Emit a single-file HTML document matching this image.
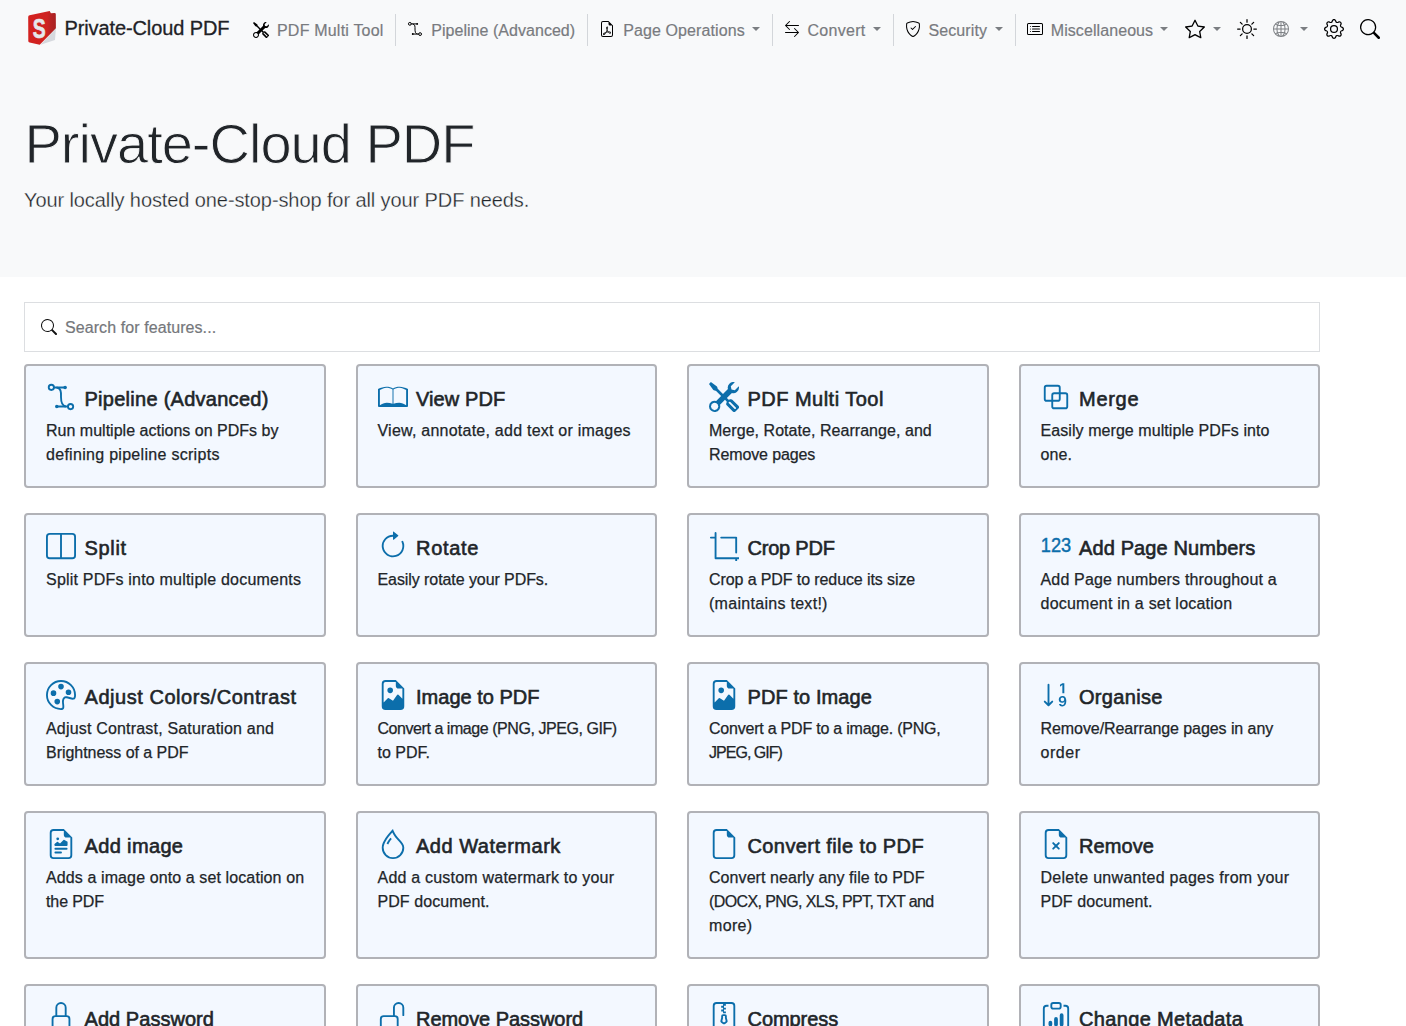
<!DOCTYPE html>
<html lang="en">
<head>
<meta charset="utf-8">
<title>Private-Cloud PDF</title>
<style>
*{box-sizing:border-box}
html,body{margin:0;padding:0}
body{width:1406px;height:1026px;overflow:hidden;background:#fff;color:#212529;
  font-family:"Liberation Sans",sans-serif;font-size:16px;line-height:1.5;-webkit-font-smoothing:antialiased}
a{color:inherit;text-decoration:none}
.t{white-space:nowrap}
nav{position:absolute;left:0;top:0;width:1406px;height:60px;background:#f8f9fa}
nav .logo{position:absolute;left:20px;top:4px}
.brand{position:absolute;left:64.5px;top:12.5px;font-size:20px;line-height:30px;color:#1f2226;-webkit-text-stroke:0.3px #1f2226;white-space:nowrap}
.nl{position:absolute;top:18.75px;font-size:16px;line-height:24px;color:#797b7f;-webkit-text-stroke:0.2px #797b7f;white-space:nowrap}
.ni{position:absolute;display:block}
.caret{position:absolute;top:27px;width:0;height:0;border-top:4.8px solid #7b7e82;border-left:4.5px solid transparent;border-right:4.5px solid transparent}
.vr{position:absolute;top:14px;width:1px;height:32px;background:#d3d6da}
.hero{position:absolute;left:0;top:60px;width:1406px;height:217.25px;background:#f8f9fa}
h1{position:absolute;left:24.5px;top:106px;margin:0;font-size:56px;line-height:76px;font-weight:300;color:#212529;-webkit-text-stroke:0.9px #f8f9fa;white-space:nowrap}
.lead{position:absolute;left:24px;top:184.75px;margin:0;font-size:20px;line-height:30px;font-weight:300;color:#212529;-webkit-text-stroke:0.3px #f8f9fa;white-space:nowrap}
.search{position:absolute;left:24px;top:302px;width:1296px;height:49.5px;border:1px solid #dcdee1;background:#fff}
.search svg{position:absolute;left:16px;top:16px;color:#111}
.search > span{position:absolute;left:40px;top:12.5px;line-height:24px;color:#75777b;-webkit-text-stroke:0.2px #75777b}
.grid{position:absolute;left:24px;top:364px;width:1296px;display:grid;grid-template-columns:repeat(4,301.5px);gap:25px 30px}
.card{display:block;border:2px solid #b1b2b7;border-radius:4px;background:#f3f8ff;padding:20px;min-height:124px}
.ct{position:relative;height:32px}
.ci{position:absolute;left:0;top:-4px;color:#0c6eab;overflow:hidden}
h5{position:absolute;left:38.5px;top:1px;margin:0;font-size:20px;line-height:24px;font-weight:400;-webkit-text-stroke:0.6px #212529;color:#212529;white-space:nowrap}
.card p{position:relative;top:0.75px;margin:0;font-size:16px;line-height:24px;color:#212529;-webkit-text-stroke:0.25px #212529}
</style>
</head>
<body>

<nav>
<svg class="logo" width="44" height="48" viewBox="0 0 44 48">
<defs><linearGradient id="lg" x1="0" x2="1" y1="0" y2="0"><stop offset="0" stop-color="#d3211f"/><stop offset="0.68" stop-color="#cf2221"/><stop offset="0.82" stop-color="#b62424"/><stop offset="1" stop-color="#a82222"/></linearGradient></defs>
<path d="M35.9 24.6 35 36 20.5 40.8Z" fill="#d6d9de"/>
<path d="M9.6 11.3 29.7 7.1 30.9 9.3 34.6 9Q35.8 9 35.8 10.3L35.9 24.2 19.7 40.8 9.6 38.6Q8.3 38.3 8.3 37L8.2 12.9Q8.2 11.6 9.6 11.3Z" fill="url(#lg)"/>
<text x="12.8" y="34.1" font-size="28.4" font-weight="700" textLength="12.9" lengthAdjust="spacingAndGlyphs" fill="#e6e8ec" stroke="#e6e8ec" stroke-width="0.7" font-family="'Liberation Sans', sans-serif">S</text>
</svg>
<div class="brand"><span class="t" id="brand" style="letter-spacing:-0.111px">Private-Cloud PDF</span></div>
<svg class="ni" width="16" height="16" viewBox="0 0 16 16" fill="currentColor" style="left:253px;top:21.5px;color:#000"><path d="M1 0 0 1l2.2 3.081a1 1 0 0 0 .815.419h.07a1 1 0 0 1 .708.293l2.675 2.675-2.617 2.654A3.003 3.003 0 0 0 0 13a3 3 0 1 0 5.878-.851l2.654-2.617.968.968-.305.914a1 1 0 0 0 .242 1.023l3.27 3.27a.997.997 0 0 0 1.414 0l1.586-1.586a.997.997 0 0 0 0-1.414l-3.27-3.27a1 1 0 0 0-1.023-.242L10.5 9.5l-.96-.96 2.68-2.643A3.005 3.005 0 0 0 16 3c0-.269-.035-.53-.102-.777l-2.14 2.141L12 4l-.364-1.757L13.777.102a3 3 0 0 0-3.675 3.68L7.462 6.46 4.793 3.793a1 1 0 0 1-.293-.707v-.071a1 1 0 0 0-.419-.814L1 0Zm9.646 10.646a.5.5 0 0 1 .708 0l2.914 2.915a.5.5 0 0 1-.707.707l-2.915-2.914a.5.5 0 0 1 0-.708ZM3 11l.471.242.529.026.287.445.445.287.026.529L5 13l-.242.471-.026.529-.445.287-.287.445-.529.026L3 15l-.471-.242L2 14.732l-.287-.445L1.268 14l-.026-.529L1 13l.242-.471.026-.529.445-.287.287-.445.529-.026L3 11Z"/></svg><div class="nl" style="left:277px"><span class="t" id="n1" style="letter-spacing:0.2px">PDF Multi Tool</span></div>
<i class="vr" style="left:395px"></i>
<svg class="ni" width="16" height="16" viewBox="0 0 16 16" fill="currentColor" style="left:407px;top:21px;color:#000"><g fill="none" stroke="currentColor" stroke-width="1"><circle cx="2.85" cy="2.85" r="1.4"/><circle cx="13.1" cy="13.1" r="1.4"/><path d="M4.25 2.9H10.2M5.8 13.05H11.7" stroke-linecap="round"/><path d="M5.6 2.95C8.3 3.3 8 6 8 8c0 2.6.3 4.8 2.6 5.05"/></g><circle cx="10.2" cy="2.9" r=".95"/><circle cx="5.75" cy="13.05" r=".95"/></svg><div class="nl" style="left:431.25px"><span class="t" id="n2" style="letter-spacing:0.037px">Pipeline (Advanced)</span></div>
<i class="vr" style="left:587px"></i>
<svg class="ni" width="16" height="16" viewBox="0 0 16 16" fill="currentColor" style="left:599px;top:21.4px;color:#000"><path d="M14 14V4.5L9.5 0H4a2 2 0 0 0-2 2v12a2 2 0 0 0 2 2h8a2 2 0 0 0 2-2zM9.5 3A1.5 1.5 0 0 0 11 4.5h2V14a1 1 0 0 1-1 1H4a1 1 0 0 1-1-1V2a1 1 0 0 1 1-1h5.5v2z"/><path d="M4.603 14.087a.81.81 0 0 1-.438-.42c-.195-.388-.13-.776.08-1.102.198-.307.526-.568.897-.787a7.68 7.68 0 0 1 1.482-.645 19.697 19.697 0 0 0 1.062-2.227 7.269 7.269 0 0 1-.43-1.295c-.086-.4-.119-.796-.046-1.136.075-.354.274-.672.65-.823.192-.077.4-.12.602-.077a.7.7 0 0 1 .477.365c.088.164.12.356.127.538.007.188-.012.396-.047.614-.084.51-.27 1.134-.52 1.794a10.954 10.954 0 0 0 .98 1.686 5.753 5.753 0 0 1 1.334.05c.364.066.734.195.96.465.12.144.193.32.2.518.007.192-.047.382-.138.563a1.04 1.04 0 0 1-.354.416.856.856 0 0 1-.51.138c-.331-.014-.654-.196-.933-.417a5.712 5.712 0 0 1-.911-.95 11.651 11.651 0 0 0-1.997.406 11.307 11.307 0 0 1-1.02 1.51c-.292.35-.609.656-.927.787a.793.793 0 0 1-.58.029zm1.379-1.901c-.166.076-.32.156-.459.238-.328.194-.541.383-.647.547-.094.145-.096.25-.04.361.01.022.02.036.026.044a.266.266 0 0 0 .035-.012c.137-.056.355-.235.635-.572a8.18 8.18 0 0 0 .45-.606zm1.64-1.33a12.71 12.71 0 0 1 1.01-.193 11.744 11.744 0 0 1-.51-.858 20.801 20.801 0 0 1-.5 1.05zm2.446.45c.15.163.296.3.435.41.24.19.407.253.498.256a.107.107 0 0 0 .07-.015.307.307 0 0 0 .094-.125.436.436 0 0 0 .059-.2.095.095 0 0 0-.026-.063c-.052-.062-.2-.152-.518-.209a3.876 3.876 0 0 0-.612-.053zM8.078 7.8a6.7 6.7 0 0 0 .2-.828c.031-.188.043-.343.038-.465a.613.613 0 0 0-.032-.198.517.517 0 0 0-.145.04c-.087.035-.158.106-.196.283-.04.192-.03.469.046.822.024.111.054.227.09.346z"/></svg><div class="nl" style="left:623.25px"><span class="t" id="n3" style="letter-spacing:0.096px">Page Operations</span></div><i class="caret" style="left:751.8px"></i>
<i class="vr" style="left:772px"></i>
<svg class="ni" width="16" height="16" viewBox="0 0 16 16" fill="currentColor" style="left:783.7px;top:21.3px;color:#000"><path fill-rule="evenodd" d="M1 11.5a.5.5 0 0 0 .5.5h11.793l-3.147 3.146a.5.5 0 0 0 .708.708l4-4a.5.5 0 0 0 0-.708l-4-4a.5.5 0 0 0-.708.708L13.293 11H1.5a.5.5 0 0 0-.5.5zm14-7a.5.5 0 0 1-.5.5H2.707l3.147 3.146a.5.5 0 1 1-.708.708l-4-4a.5.5 0 0 1 0-.708l4-4a.5.5 0 1 1 .708.708L2.707 4H14.5a.5.5 0 0 1 .5.5z"/></svg><div class="nl" style="left:807.5px"><span class="t" id="n4" style="letter-spacing:0.284px">Convert</span></div><i class="caret" style="left:872.8px"></i>
<i class="vr" style="left:893px"></i>
<svg class="ni" width="16" height="16" viewBox="0 0 16 16" fill="currentColor" style="left:904.7px;top:21.2px;color:#000"><path d="M5.338 1.59a61.44 61.44 0 0 0-2.837.856.481.481 0 0 0-.328.39c-.554 4.157.726 7.19 2.253 9.188a10.725 10.725 0 0 0 2.287 2.233c.346.244.652.42.893.533.12.057.218.095.293.118a.55.55 0 0 0 .101.025.615.615 0 0 0 .1-.025c.076-.023.174-.061.294-.118.24-.113.547-.29.893-.533a10.726 10.726 0 0 0 2.287-2.233c1.527-1.997 2.807-5.031 2.253-9.188a.48.48 0 0 0-.328-.39c-.651-.213-1.75-.56-2.837-.855C9.552 1.29 8.531 1.067 8 1.067c-.53 0-1.552.223-2.662.524zM5.072.56C6.157.265 7.31 0 8 0s1.843.265 2.928.56c1.11.3 2.229.655 2.887.87a1.54 1.54 0 0 1 1.044 1.262c.596 4.477-.787 7.795-2.465 9.99a11.775 11.775 0 0 1-2.517 2.453 7.159 7.159 0 0 1-1.048.625c-.28.132-.581.24-.829.24s-.548-.108-.829-.24a7.158 7.158 0 0 1-1.048-.625 11.777 11.777 0 0 1-2.517-2.453C1.928 10.487.545 7.169 1.141 2.692A1.54 1.54 0 0 1 2.185 1.43 62.456 62.456 0 0 1 5.072.56z"/><path d="M10.854 5.146a.5.5 0 0 1 0 .708l-3 3a.5.5 0 0 1-.708 0l-1.5-1.5a.5.5 0 1 1 .708-.708L7.5 7.793l2.646-2.647a.5.5 0 0 1 .708 0z"/></svg><div class="nl" style="left:928.5px"><span class="t" id="n5" style="letter-spacing:0.097px">Security</span></div><i class="caret" style="left:995.1px"></i>
<i class="vr" style="left:1015px"></i>
<svg class="ni" width="16" height="16" viewBox="0 0 16 16" fill="currentColor" style="left:1026.7px;top:21px;color:#000"><path d="M14.5 3a.5.5 0 0 1 .5.5v9a.5.5 0 0 1-.5.5h-13a.5.5 0 0 1-.5-.5v-9a.5.5 0 0 1 .5-.5h13zm-13-1A1.5 1.5 0 0 0 0 3.5v9A1.5 1.5 0 0 0 1.5 14h13a1.5 1.5 0 0 0 1.5-1.5v-9A1.5 1.5 0 0 0 14.5 2h-13z"/><path d="M5 8a.5.5 0 0 1 .5-.5h7a.5.5 0 0 1 0 1h-7A.5.5 0 0 1 5 8zm0-2.5a.5.5 0 0 1 .5-.5h7a.5.5 0 0 1 0 1h-7a.5.5 0 0 1-.5-.5zm0 5a.5.5 0 0 1 .5-.5h7a.5.5 0 0 1 0 1h-7a.5.5 0 0 1-.5-.5zm-1-5a.5.5 0 1 1-1 0 .5.5 0 0 1 1 0zM4 8a.5.5 0 1 1-1 0 .5.5 0 0 1 1 0zm0 2.5a.5.5 0 1 1-1 0 .5.5 0 0 1 1 0z"/></svg><div class="nl" style="left:1050.75px"><span class="t" id="n6" style="letter-spacing:0.08px">Miscellaneous</span></div><i class="caret" style="left:1160.3px"></i>
<svg class="ni" width="20" height="20" viewBox="0 0 16 16" fill="currentColor" style="left:1184.6px;top:19.3px;color:#000"><path d="M2.866 14.85c-.078.444.36.791.746.593l4.39-2.256 4.389 2.256c.386.198.824-.149.746-.592l-.83-4.73 3.522-3.356c.33-.314.16-.888-.282-.95l-4.898-.696L8.465.792a.513.513 0 0 0-.927 0L5.354 5.12l-4.898.696c-.441.062-.612.636-.283.95l3.523 3.356-.83 4.73zm4.905-2.767-3.686 1.894.694-3.957a.565.565 0 0 0-.163-.505L1.71 6.745l4.052-.576a.525.525 0 0 0 .393-.288L8 2.223l1.847 3.658a.525.525 0 0 0 .393.288l4.052.575-2.906 2.77a.565.565 0 0 0-.163.506l.694 3.957-3.686-1.894a.503.503 0 0 0-.461 0z"/></svg><i class="caret" style="left:1212.9px"></i>
<svg class="ni" width="20" height="20" viewBox="0 0 16 16" fill="currentColor" style="left:1236.5px;top:19px;color:#000"><path d="M8 11a3 3 0 1 1 0-6 3 3 0 0 1 0 6zm0 1a4 4 0 1 0 0-8 4 4 0 0 0 0 8zM8 0a.5.5 0 0 1 .5.5v2a.5.5 0 0 1-1 0v-2A.5.5 0 0 1 8 0zm0 13a.5.5 0 0 1 .5.5v2a.5.5 0 0 1-1 0v-2A.5.5 0 0 1 8 13zm8-5a.5.5 0 0 1-.5.5h-2a.5.5 0 0 1 0-1h2a.5.5 0 0 1 .5.5zM3 8a.5.5 0 0 1-.5.5h-2a.5.5 0 0 1 0-1h2A.5.5 0 0 1 3 8zm10.657-5.657a.5.5 0 0 1 0 .707l-1.414 1.415a.5.5 0 1 1-.707-.708l1.414-1.414a.5.5 0 0 1 .707 0zm-9.193 9.193a.5.5 0 0 1 0 .707L3.05 13.657a.5.5 0 0 1-.707-.707l1.414-1.414a.5.5 0 0 1 .707 0zm9.193 2.121a.5.5 0 0 1-.707 0l-1.414-1.414a.5.5 0 0 1 .707-.707l1.414 1.414a.5.5 0 0 1 0 .707zM4.464 4.465a.5.5 0 0 1-.707 0L2.343 3.05a.5.5 0 1 1 .707-.707l1.414 1.414a.5.5 0 0 1 0 .708z"/></svg>
<svg class="ni" width="16" height="16" viewBox="0 0 16 16" fill="currentColor" style="left:1272.7px;top:21.1px;color:#7d8084"><path d="M0 8a8 8 0 1 1 16 0A8 8 0 0 1 0 8zm7.5-6.923c-.67.204-1.335.82-1.887 1.855-.143.268-.276.56-.395.872.705.157 1.472.257 2.282.287V1.077zM4.249 3.539c.142-.384.304-.744.481-1.078a6.7 6.7 0 0 1 .597-.933A7.01 7.01 0 0 0 3.051 3.05c.362.184.763.349 1.198.49zM3.509 7.5c.036-1.07.188-2.087.436-3.008a9.124 9.124 0 0 1-1.565-.667A6.964 6.964 0 0 0 1.018 7.5h2.49zm1.4-2.741a12.344 12.344 0 0 0-.4 2.741H7.5V5.091c-.91-.03-1.783-.145-2.591-.332zM8.5 5.09V7.5h2.99a12.342 12.342 0 0 0-.399-2.741c-.808.187-1.681.301-2.591.332zM4.51 8.5c.035.987.176 1.914.399 2.741A13.612 13.612 0 0 1 7.5 10.91V8.5H4.51zm3.99 0v2.409c.91.03 1.783.145 2.591.332.223-.827.364-1.754.4-2.741H8.5zm-3.282 3.696c.12.312.252.604.395.872.552 1.035 1.218 1.65 1.887 1.855V11.91c-.81.03-1.577.13-2.282.287zm.11 2.276a6.696 6.696 0 0 1-.598-.933 8.853 8.853 0 0 1-.481-1.079 8.38 8.38 0 0 0-1.198.49 7.01 7.01 0 0 0 2.276 1.522zm-1.383-2.964A13.36 13.36 0 0 1 3.508 8.5h-2.49a6.963 6.963 0 0 0 1.362 3.675c.47-.258.995-.482 1.565-.667zm6.728 2.964a7.009 7.009 0 0 0 2.275-1.521 8.376 8.376 0 0 0-1.197-.49 8.853 8.853 0 0 1-.481 1.078 6.688 6.688 0 0 1-.597.933zM8.5 11.909v3.014c.67-.204 1.335-.82 1.887-1.855.143-.268.276-.56.395-.872A12.63 12.63 0 0 0 8.5 11.91zm3.555-.401c.57.185 1.095.409 1.565.667A6.963 6.963 0 0 0 14.982 8.5h-2.49a13.36 13.36 0 0 1-.437 3.008zM14.982 7.5a6.963 6.963 0 0 0-1.362-3.675c-.47.258-.995.482-1.565.667.248.92.4 1.938.437 3.008h2.49zM11.27 2.461c.177.334.339.694.482 1.078a8.368 8.368 0 0 0 1.196-.49 7.01 7.01 0 0 0-2.275-1.52c.218.283.418.597.597.932zm-.488 1.343a7.765 7.765 0 0 0-.395-.872C9.835 1.897 9.17 1.282 8.5 1.077V4.09c.81-.03 1.577-.13 2.282-.287z"/></svg><i class="caret" style="left:1299.5px"></i>
<svg class="ni" width="20" height="20" viewBox="0 0 16 16" fill="currentColor" style="left:1323.7px;top:19.1px;color:#000"><path d="M8 4.754a3.246 3.246 0 1 0 0 6.492 3.246 3.246 0 0 0 0-6.492zM5.754 8a2.246 2.246 0 1 1 4.492 0 2.246 2.246 0 0 1-4.492 0z"/><path d="M9.796 1.343c-.527-1.79-3.065-1.79-3.592 0l-.094.319a.873.873 0 0 1-1.255.52l-.292-.16c-1.64-.892-3.433.902-2.54 2.541l.159.292a.873.873 0 0 1-.52 1.255l-.319.094c-1.79.527-1.79 3.065 0 3.592l.319.094a.873.873 0 0 1 .52 1.255l-.16.292c-.892 1.64.901 3.434 2.541 2.54l.292-.159a.873.873 0 0 1 1.255.52l.094.319c.527 1.79 3.065 1.79 3.592 0l.094-.319a.873.873 0 0 1 1.255-.52l.292.16c1.64.893 3.434-.902 2.54-2.541l-.159-.292a.873.873 0 0 1 .52-1.255l.319-.094c1.79-.527 1.79-3.065 0-3.592l-.319-.094a.873.873 0 0 1-.52-1.255l.16-.292c.893-1.64-.902-3.433-2.541-2.54l-.292.159a.873.873 0 0 1-1.255-.52l-.094-.319zm-2.633.283c.246-.835 1.428-.835 1.674 0l.094.319a1.873 1.873 0 0 0 2.693 1.115l.291-.16c.764-.415 1.6.42 1.184 1.185l-.159.292a1.873 1.873 0 0 0 1.116 2.692l.318.094c.835.246.835 1.428 0 1.674l-.319.094a1.873 1.873 0 0 0-1.115 2.693l.16.291c.415.764-.42 1.6-1.185 1.184l-.291-.159a1.873 1.873 0 0 0-2.693 1.116l-.094.318c-.246.835-1.428.835-1.674 0l-.094-.319a1.873 1.873 0 0 0-2.692-1.115l-.292.16c-.764.415-1.6-.42-1.184-1.185l.159-.291A1.873 1.873 0 0 0 1.945 8.93l-.319-.094c-.835-.246-.835-1.428 0-1.674l.319-.094A1.873 1.873 0 0 0 3.06 4.377l-.16-.292c-.415-.764.42-1.6 1.185-1.184l.292.159a1.873 1.873 0 0 0 2.692-1.115l.094-.319z"/></svg>
<svg class="ni" width="20" height="20" viewBox="0 0 16 16" fill="currentColor" style="left:1359.6px;top:19.4px;color:#000"><path d="M11.742 10.344a6.5 6.5 0 1 0-1.397 1.398h-.001c.03.04.062.078.098.115l3.85 3.85a1 1 0 0 0 1.415-1.414l-3.85-3.85a1.007 1.007 0 0 0-.115-.1zM12 6.5a5.5 5.5 0 1 1-11 0 5.5 5.5 0 0 1 11 0z"/></svg>
</nav>
<div class="hero"></div>
<h1><span class="t" id="h1" style="letter-spacing:-0.989px">Private-Cloud PDF</span></h1>
<p class="lead"><span class="t" id="lead" style="letter-spacing:-0.095px">Your locally hosted one-stop-shop for all your PDF needs.</span></p>
<div class="search"><svg class="" width="16" height="16" viewBox="0 0 16 16" fill="currentColor" style=""><path d="M11.742 10.344a6.5 6.5 0 1 0-1.397 1.398h-.001c.03.04.062.078.098.115l3.85 3.85a1 1 0 0 0 1.415-1.414l-3.85-3.85a1.007 1.007 0 0 0-.115-.1zM12 6.5a5.5 5.5 0 1 1-11 0 5.5 5.5 0 0 1 11 0z"/></svg><span><span class="t" id="ph" style="letter-spacing:0.081px">Search for features...</span></span></div>
<div class="grid">
<a class="card" href="#">
  <div class="ct"><svg class="ci" width="30" height="30" viewBox="0 0 16 16" fill="currentColor" style=""><g fill="none" stroke="currentColor" stroke-width="1"><circle cx="2.85" cy="2.85" r="1.4"/><circle cx="13.1" cy="13.1" r="1.4"/><path d="M4.25 2.9H10.2M5.8 13.05H11.7" stroke-linecap="round"/><path d="M5.6 2.95C8.3 3.3 8 6 8 8c0 2.6.3 4.8 2.6 5.05"/></g><circle cx="10.2" cy="2.9" r=".95"/><circle cx="5.75" cy="13.05" r=".95"/></svg><h5><span class="t" id="c0t" style="letter-spacing:0.268px">Pipeline (Advanced)</span></h5></div>
  <p><span class="t" id="c0d0" style="letter-spacing:0.012px">Run multiple actions on PDFs by</span><br><span class="t" id="c0d1" style="letter-spacing:0.294px">defining pipeline scripts</span></p>
</a>
<a class="card" href="#">
  <div class="ct"><svg class="ci" width="30" height="30" viewBox="0 0 16 16" fill="currentColor" style=""><path fill-rule="evenodd" d="M0 3.7C1.5 3 3 2.5 4.4 2.5 5.8 2.5 7.2 2.8 8 3.4 8.8 2.8 10.2 2.5 11.6 2.5 13 2.5 14.5 3 16 3.7V12.8a.5.5 0 0 1-.5.5H.5a.5.5 0 0 1-.5-.5ZM1 4.3C2.2 3.6 3.3 3.05 4.4 3.05 5.6 3.05 6.9 3.35 7.75 3.95V11.6C6.8 11.2 5.8 11.05 4.7 11.05 3.4 11.05 2.2 11.5 1 12.4ZM15 4.3C13.8 3.6 12.7 3.05 11.6 3.05 10.4 3.05 9.1 3.35 8.25 3.95V11.6C9.2 11.2 10.2 11.05 11.3 11.05 12.6 11.05 13.8 11.5 15 12.4Z"/></svg><h5><span class="t" id="c1t" style="letter-spacing:0.082px">View PDF</span></h5></div>
  <p><span class="t" id="c1d0" style="letter-spacing:0.237px">View, annotate, add text or images</span></p>
</a>
<a class="card" href="#">
  <div class="ct"><svg class="ci" width="30" height="30" viewBox="0 0 16 16" fill="currentColor" style=""><path d="M1 0 0 1l2.2 3.081a1 1 0 0 0 .815.419h.07a1 1 0 0 1 .708.293l2.675 2.675-2.617 2.654A3.003 3.003 0 0 0 0 13a3 3 0 1 0 5.878-.851l2.654-2.617.968.968-.305.914a1 1 0 0 0 .242 1.023l3.27 3.27a.997.997 0 0 0 1.414 0l1.586-1.586a.997.997 0 0 0 0-1.414l-3.27-3.27a1 1 0 0 0-1.023-.242L10.5 9.5l-.96-.96 2.68-2.643A3.005 3.005 0 0 0 16 3c0-.269-.035-.53-.102-.777l-2.14 2.141L12 4l-.364-1.757L13.777.102a3 3 0 0 0-3.675 3.68L7.462 6.46 4.793 3.793a1 1 0 0 1-.293-.707v-.071a1 1 0 0 0-.419-.814L1 0Zm9.646 10.646a.5.5 0 0 1 .708 0l2.914 2.915a.5.5 0 0 1-.707.707l-2.915-2.914a.5.5 0 0 1 0-.708ZM3 11l.471.242.529.026.287.445.445.287.026.529L5 13l-.242.471-.026.529-.445.287-.287.445-.529.026L3 15l-.471-.242L2 14.732l-.287-.445L1.268 14l-.026-.529L1 13l.242-.471.026-.529.445-.287.287-.445.529-.026L3 11Z"/></svg><h5><span class="t" id="c2t" style="letter-spacing:0.476px">PDF Multi Tool</span></h5></div>
  <p><span class="t" id="c2d0" style="letter-spacing:0.045px">Merge, Rotate, Rearrange, and</span><br><span class="t" id="c2d1" style="letter-spacing:-0.117px">Remove pages</span></p>
</a>
<a class="card" href="#">
  <div class="ct"><svg class="ci" width="30" height="30" viewBox="0 0 16 16" fill="currentColor" style=""><rect x="2" y="2" width="8" height="8" rx="1" fill="none" stroke="currentColor" stroke-width="1"/><rect x="6" y="6" width="8" height="8" rx="1" fill="none" stroke="currentColor" stroke-width="1"/></svg><h5><span class="t" id="c3t" style="letter-spacing:0.716px">Merge</span></h5></div>
  <p><span class="t" id="c3d0" style="letter-spacing:0.072px">Easily merge multiple PDFs into</span><br><span class="t" id="c3d1" style="letter-spacing:0.141px">one.</span></p>
</a>
<a class="card" href="#">
  <div class="ct"><svg class="ci" width="30" height="30" viewBox="0 0 16 16" fill="currentColor" style=""><path d="M0 3a2 2 0 0 1 2-2h12a2 2 0 0 1 2 2v10a2 2 0 0 1-2 2H2a2 2 0 0 1-2-2V3zm8.5-1v12H14a1 1 0 0 0 1-1V3a1 1 0 0 0-1-1H8.5zm-1 0H2a1 1 0 0 0-1 1v10a1 1 0 0 0 1 1h5.5V2z"/></svg><h5><span class="t" id="c4t" style="letter-spacing:0.663px">Split</span></h5></div>
  <p><span class="t" id="c4d0" style="letter-spacing:0.207px">Split PDFs into multiple documents</span></p>
</a>
<a class="card" href="#">
  <div class="ct"><svg class="ci" width="30" height="30" viewBox="0 0 16 16" fill="currentColor" style=""><path fill-rule="evenodd" d="M8 3a5 5 0 1 0 4.546 2.914.5.5 0 0 1 .908-.417A6 6 0 1 1 8 2v1z"/><path d="M8 4.466V.534a.25.25 0 0 1 .41-.192l2.36 1.966c.12.1.12.284 0 .384L8.41 4.658A.25.25 0 0 1 8 4.466z"/></svg><h5><span class="t" id="c5t" style="letter-spacing:0.7px">Rotate</span></h5></div>
  <p><span class="t" id="c5d0" style="letter-spacing:-0.078px">Easily rotate your PDFs.</span></p>
</a>
<a class="card" href="#">
  <div class="ct"><svg class="ci" width="30" height="30" viewBox="0 0 16 16" fill="currentColor" style=""><path d="M3.5.5A.5.5 0 0 1 4 1v13h13a.5.5 0 0 1 0 1h-2v2a.5.5 0 0 1-1 0v-2H3.5a.5.5 0 0 1-.5-.5V4H1a.5.5 0 0 1 0-1h2V1a.5.5 0 0 1 .5-.5zm2.5 3a.5.5 0 0 1 .5-.5h8a.5.5 0 0 1 .5.5v8a.5.5 0 0 1-1 0V4H6.5a.5.5 0 0 1-.5-.5z"/></svg><h5><span class="t" id="c6t" style="letter-spacing:-0.211px">Crop PDF</span></h5></div>
  <p><span class="t" id="c6d0" style="letter-spacing:-0.098px">Crop a PDF to reduce its size</span><br><span class="t" id="c6d1" style="letter-spacing:0.29px">(maintains text!)</span></p>
</a>
<a class="card" href="#">
  <div class="ct"><svg class="ci" width="30" height="30" viewBox="0 0 16 16" fill="currentColor" style=""><text x="8" y="11.35" font-size="10.3" text-anchor="middle" textLength="16.2" lengthAdjust="spacingAndGlyphs" stroke="currentColor" stroke-width="0.22" font-family="'Liberation Sans', sans-serif">123</text></svg><h5><span class="t" id="c7t" style="letter-spacing:0.122px">Add Page Numbers</span></h5></div>
  <p><span class="t" id="c7d0" style="letter-spacing:0.174px">Add Page numbers throughout a</span><br><span class="t" id="c7d1" style="letter-spacing:0.228px">document in a set location</span></p>
</a>
<a class="card" href="#">
  <div class="ct"><svg class="ci" width="30" height="30" viewBox="0 0 16 16" fill="currentColor" style=""><path d="M8 5a1.5 1.5 0 1 0 0-3 1.5 1.5 0 0 0 0 3zm4 3a1.5 1.5 0 1 0 0-3 1.5 1.5 0 0 0 0 3zM5.5 7a1.5 1.5 0 1 1-3 0 1.5 1.5 0 0 1 3 0zm.5 6a1.5 1.5 0 1 0 0-3 1.5 1.5 0 0 0 0 3z"/><path d="M16 8c0 3.15-1.866 2.585-3.567 2.07C11.42 9.763 10.465 9.473 10 10c-.603.683-.475 1.819-.351 2.92C9.826 14.495 9.996 16 8 16a8 8 0 1 1 8-8zm-8 7c.611 0 .654-.171.655-.176.078-.146.124-.464.07-1.119-.014-.168-.037-.37-.061-.591-.052-.464-.112-1.005-.118-1.462-.01-.707.083-1.61.704-2.314.369-.417.845-.578 1.272-.618.404-.038.812.026 1.16.104.343.077.702.186 1.025.284l.028.008c.346.105.658.199.953.266.653.148.904.083.991.024C14.717 9.38 15 9.161 15 8a7 7 0 1 0-7 7z"/></svg><h5><span class="t" id="c8t" style="letter-spacing:0.546px">Adjust Colors/Contrast</span></h5></div>
  <p><span class="t" id="c8d0" style="letter-spacing:0.184px">Adjust Contrast, Saturation and</span><br><span class="t" id="c8d1" style="letter-spacing:-0.035px">Brightness of a PDF</span></p>
</a>
<a class="card" href="#">
  <div class="ct"><svg class="ci" width="30" height="30" viewBox="0 0 16 16" fill="currentColor" style=""><path d="M6.502 7a1.5 1.5 0 1 0 0-3 1.5 1.5 0 0 0 0 3z"/><path d="M14 14a2 2 0 0 1-2 2H4a2 2 0 0 1-2-2V2a2 2 0 0 1 2-2h5.5L14 4.5V14zM4 1a1 1 0 0 0-1 1v10l2.224-2.224a.5.5 0 0 1 .61-.075L8 11l2.157-3.02a.5.5 0 0 1 .76-.063L13 10V4.500h-2A1.500 1.500 0 0 1 9.500 3V1H4z"/></svg><h5><span class="t" id="c9t" style="letter-spacing:0.012px">Image to PDF</span></h5></div>
  <p><span class="t" id="c9d0" style="letter-spacing:-0.447px">Convert a image (PNG, JPEG, GIF)</span><br><span class="t" id="c9d1" style="letter-spacing:-0.015px">to PDF.</span></p>
</a>
<a class="card" href="#">
  <div class="ct"><svg class="ci" width="30" height="30" viewBox="0 0 16 16" fill="currentColor" style=""><path d="M6.502 7a1.5 1.5 0 1 0 0-3 1.5 1.5 0 0 0 0 3z"/><path d="M14 14a2 2 0 0 1-2 2H4a2 2 0 0 1-2-2V2a2 2 0 0 1 2-2h5.5L14 4.5V14zM4 1a1 1 0 0 0-1 1v10l2.224-2.224a.5.5 0 0 1 .61-.075L8 11l2.157-3.02a.5.5 0 0 1 .76-.063L13 10V4.500h-2A1.500 1.500 0 0 1 9.500 3V1H4z"/></svg><h5><span class="t" id="c10t" style="letter-spacing:0.095px">PDF to Image</span></h5></div>
  <p><span class="t" id="c10d0" style="letter-spacing:-0.22px">Convert a PDF to a image. (PNG,</span><br><span class="t" id="c10d1" style="letter-spacing:-0.978px">JPEG, GIF)</span></p>
</a>
<a class="card" href="#">
  <div class="ct"><svg class="ci" width="30" height="30" viewBox="0 0 16 16" fill="currentColor" style=""><path d="M12.438 1.668V7H11.39V2.684h-.051l-1.211.859v-.969l1.262-.906h1.046z"/><path fill-rule="evenodd" d="M11.36 14.098c-1.137 0-1.708-.657-1.762-1.278h1.004c.058.223.343.45.773.45.824 0 1.164-.829 1.133-1.856h-.059c-.148.39-.57.742-1.261.742-.91 0-1.72-.613-1.72-1.758 0-1.148.848-1.835 1.973-1.835 1.09 0 2.063.636 2.063 2.687 0 1.867-.723 2.848-2.145 2.848zm.062-2.735c.504 0 .933-.336.933-.972 0-.633-.398-1.008-.94-1.008-.52 0-.927.375-.927 1 0 .64.418.98.934.98z"/><path d="M4.5 2.5a.5.5 0 0 0-1 0v9.793l-1.146-1.147a.5.5 0 0 0-.708.708l2 1.999.007.007a.497.497 0 0 0 .7-.006l2-2a.5.5 0 0 0-.707-.708L4.5 12.293V2.5z"/></svg><h5><span class="t" id="c11t" style="letter-spacing:0.316px">Organise</span></h5></div>
  <p><span class="t" id="c11d0" style="letter-spacing:-0.075px">Remove/Rearrange pages in any</span><br><span class="t" id="c11d1" style="letter-spacing:0.574px">order</span></p>
</a>
<a class="card" href="#">
  <div class="ct"><svg class="ci" width="30" height="30" viewBox="0 0 16 16" fill="currentColor" style=""><path d="M14 4.5V14a2 2 0 0 1-2 2H4a2 2 0 0 1-2-2V2a2 2 0 0 1 2-2h5.5L14 4.5zm-3 0A1.5 1.5 0 0 1 9.5 3V1H4a1 1 0 0 0-1 1v12a1 1 0 0 0 1 1h8a1 1 0 0 0 1-1V4.5h-2z"/><path d="M4.5 12.5A.5.5 0 0 1 5 12h3a.5.5 0 0 1 0 1H5a.5.5 0 0 1-.5-.5zm0-2A.5.5 0 0 1 5 10h6a.5.5 0 0 1 0 1H5a.5.5 0 0 1-.5-.5zm1.639-3.708 1.33.886 1.854-1.855a.25.25 0 0 1 .289-.047l1.888.974V8.5a.5.5 0 0 1-.5.5H5a.5.5 0 0 1-.5-.5V8s1.54-1.274 1.639-1.208zM6.25 6a.75.75 0 1 0 0-1.5.75.75 0 0 0 0 1.5z"/></svg><h5><span class="t" id="c12t" style="letter-spacing:0.36px">Add image</span></h5></div>
  <p><span class="t" id="c12d0" style="letter-spacing:0.108px">Adds a image onto a set location on</span><br><span class="t" id="c12d1" style="letter-spacing:-0.098px">the PDF</span></p>
</a>
<a class="card" href="#">
  <div class="ct"><svg class="ci" width="30" height="30" viewBox="0 0 16 16" fill="currentColor" style=""><path fill-rule="evenodd" d="M7.21.8C7.69.295 8 0 8 0c.109.363.234.708.371 1.038.812 1.946 2.073 3.35 3.197 4.6C12.878 7.096 14 8.345 14 10a6 6 0 0 1-12 0C2 6.668 5.58 2.517 7.21.8zm.413 1.021A31.25 31.25 0 0 0 5.794 3.99c-.726.95-1.436 2.008-1.96 3.07C3.304 8.133 3 9.138 3 10a5 5 0 0 0 10 0c0-1.201-.796-2.157-2.181-3.7l-.03-.032C9.75 5.11 8.5 3.72 7.623 1.82z"/><path fill-rule="evenodd" d="M4.553 7.776c.82-1.641 1.717-2.753 2.093-3.13l.708.708c-.29.29-1.128 1.311-1.907 2.87l-.894-.448z"/></svg><h5><span class="t" id="c13t" style="letter-spacing:0.511px">Add Watermark</span></h5></div>
  <p><span class="t" id="c13d0" style="letter-spacing:0.213px">Add a custom watermark to your</span><br><span class="t" id="c13d1" style="letter-spacing:0.064px">PDF document.</span></p>
</a>
<a class="card" href="#">
  <div class="ct"><svg class="ci" width="30" height="30" viewBox="0 0 16 16" fill="currentColor" style=""><path d="M14 4.5V14a2 2 0 0 1-2 2H4a2 2 0 0 1-2-2V2a2 2 0 0 1 2-2h5.5L14 4.5zm-3 0A1.5 1.5 0 0 1 9.5 3V1H4a1 1 0 0 0-1 1v12a1 1 0 0 0 1 1h8a1 1 0 0 0 1-1V4.5h-2z"/></svg><h5><span class="t" id="c14t" style="letter-spacing:0.401px">Convert file to PDF</span></h5></div>
  <p><span class="t" id="c14d0" style="letter-spacing:0.069px">Convert nearly any file to PDF</span><br><span class="t" id="c14d1" style="letter-spacing:-0.603px">(DOCX, PNG, XLS, PPT, TXT and</span><br><span class="t" id="c14d2" style="letter-spacing:0.336px">more)</span></p>
</a>
<a class="card" href="#">
  <div class="ct"><svg class="ci" width="30" height="30" viewBox="0 0 16 16" fill="currentColor" style=""><path d="M6.854 7.146a.5.5 0 1 0-.708.708L7.293 9l-1.147 1.146a.5.5 0 0 0 .708.708L8 9.707l1.146 1.147a.5.5 0 0 0 .708-.708L8.707 9l1.147-1.146a.5.5 0 0 0-.708-.708L8 8.293 6.854 7.146z"/><path d="M14 14V4.5L9.5 0H4a2 2 0 0 0-2 2v12a2 2 0 0 0 2 2h8a2 2 0 0 0 2-2zM9.5 3A1.5 1.5 0 0 0 11 4.5h2V14a1 1 0 0 1-1 1H4a1 1 0 0 1-1-1V2a1 1 0 0 1 1-1h5.5v2z"/></svg><h5><span class="t" id="c15t" style="letter-spacing:0.102px">Remove</span></h5></div>
  <p><span class="t" id="c15d0" style="letter-spacing:0.283px">Delete unwanted pages from your</span><br><span class="t" id="c15d1" style="letter-spacing:0.064px">PDF document.</span></p>
</a>
<a class="card" href="#">
  <div class="ct"><svg class="ci" width="30" height="30" viewBox="0 0 16 16" fill="currentColor" style=""><path d="M8 1a2 2 0 0 1 2 2v4H6V3a2 2 0 0 1 2-2zm3 6V3a3 3 0 0 0-6 0v4a2 2 0 0 0-2 2v5a2 2 0 0 0 2 2h6a2 2 0 0 0 2-2V9a2 2 0 0 0-2-2zM5 8h6a1 1 0 0 1 1 1v5a1 1 0 0 1-1 1H5a1 1 0 0 1-1-1V9a1 1 0 0 1 1-1z"/></svg><h5><span class="t" id="c16t" style="letter-spacing:0.045px">Add Password</span></h5></div>
  <p><span class="t" id="c16d0" style="letter-spacing:0.148px">Encrypt your PDF document with a</span><br><span class="t" id="c16d1" style="letter-spacing:0.075px">password.</span></p>
</a>
<a class="card" href="#">
  <div class="ct"><svg class="ci" width="30" height="30" viewBox="0 0 16 16" fill="currentColor" style=""><path d="M11 1a2 2 0 0 0-2 2v4a2 2 0 0 1 2 2v5a2 2 0 0 1-2 2H3a2 2 0 0 1-2-2V9a2 2 0 0 1 2-2h5V3a3 3 0 0 1 6 0v4a.5.5 0 0 1-1 0V3a2 2 0 0 0-2-2zM3 8a1 1 0 0 0-1 1v5a1 1 0 0 0 1 1h6a1 1 0 0 0 1-1V9a1 1 0 0 0-1-1H3z"/></svg><h5><span class="t" id="c17t" style="letter-spacing:-0.051px">Remove Password</span></h5></div>
  <p><span class="t" id="c17d0" style="letter-spacing:0.299px">Remove password protection from</span><br><span class="t" id="c17d1" style="letter-spacing:0.092px">your PDF document.</span></p>
</a>
<a class="card" href="#">
  <div class="ct"><svg class="ci" width="30" height="30" viewBox="0 0 16 16" fill="currentColor" style=""><path d="M6.5 7.5a1 1 0 0 1 1-1h1a1 1 0 0 1 1 1v.938l.4 1.599a1 1 0 0 1-.416 1.074l-.93.62a1 1 0 0 1-1.109 0l-.93-.62a1 1 0 0 1-.415-1.074l.4-1.599V7.5zm2 0h-1v.938a1 1 0 0 1-.03.243l-.4 1.598.93.62.93-.62-.4-1.598a1 1 0 0 1-.03-.243V7.5z"/><path d="M2 2a2 2 0 0 1 2-2h8a2 2 0 0 1 2 2v12a2 2 0 0 1-2 2H4a2 2 0 0 1-2-2V2zm5.5-1H4a1 1 0 0 0-1 1v12a1 1 0 0 0 1 1h8a1 1 0 0 0 1-1V2a1 1 0 0 0-1-1H9v1H8v1h1v1H8v1h1v1H7.5V5h-1V4h1V3h-1V2h1V1z"/></svg><h5><span class="t" id="c18t" style="letter-spacing:-0.063px">Compress</span></h5></div>
  <p><span class="t" id="c18d0" style="letter-spacing:0.075px">Compress PDFs to reduce their file</span><br><span class="t" id="c18d1" style="letter-spacing:-0.329px">size.</span></p>
</a>
<a class="card" href="#">
  <div class="ct"><svg class="ci" width="30" height="30" viewBox="0 0 16 16" fill="currentColor" style=""><path d="M4 11a1 1 0 1 1 2 0v1a1 1 0 1 1-2 0v-1zm6-4a1 1 0 1 1 2 0v5a1 1 0 1 1-2 0V7zM7 9a1 1 0 0 1 2 0v3a1 1 0 1 1-2 0V9z"/><path d="M4 1.5H3a2 2 0 0 0-2 2V14a2 2 0 0 0 2 2h10a2 2 0 0 0 2-2V3.5a2 2 0 0 0-2-2h-1v1h1a1 1 0 0 1 1 1V14a1 1 0 0 1-1 1H3a1 1 0 0 1-1-1V3.5a1 1 0 0 1 1-1h1v-1z"/><path d="M9.5 1a.5.5 0 0 1 .5.5v1a.5.5 0 0 1-.5.5h-3a.5.5 0 0 1-.5-.5v-1a.5.5 0 0 1 .5-.5h3zm-3-1A1.5 1.5 0 0 0 5 1.5v1A1.5 1.5 0 0 0 6.500 4h3A1.500 1.500 0 0 0 11 2.500v-1A1.500 1.500 0 0 0 9.500 0h-3z"/></svg><h5><span class="t" id="c19t" style="letter-spacing:0.347px">Change Metadata</span></h5></div>
  <p><span class="t" id="c19d0" style="letter-spacing:0.258px">Change/Remove/Add metadata from</span><br><span class="t" id="c19d1" style="letter-spacing:-0.015px">a PDF document</span></p>
</a>
</div>
</body>
</html>
